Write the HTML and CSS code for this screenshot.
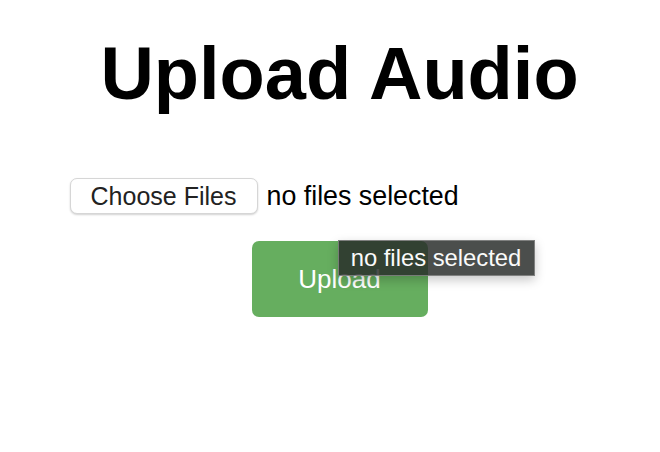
FILE: index.html
```html
<!DOCTYPE html>
<html>
<head>
<meta charset="utf-8">
<link rel="stylesheet" href="styles.css">
</head>
<body>
<div class="page">
  <h1 class="title">Upload Audio</h1>
  <form class="form">
    <div class="file-row">
      <span class="file-btn">Choose Files</span>
      <span class="file-label">no files selected</span>
    </div>
    <div class="submit-row">
      <span class="upload-btn">Upload</span>
      <span class="tooltip">no files selected</span>
    </div>
  </form>
</div>
</body>
</html>
```
FILE: styles.css
```css
html, body {
  margin: 0;
  padding: 0;
  background: #ffffff;
}
body {
  font-family: "Liberation Sans", Arial, sans-serif;
  color: #000;
}
.page {
  width: 660px;
  height: 452px;
  display: flex;
  flex-direction: column;
  align-items: center;
  padding-left: 19px;
  box-sizing: border-box;
}
.title {
  margin: 31px 0 0 0;
  font-size: 74px;
  font-weight: bold;
  line-height: 86px;
  letter-spacing: 0;
}
.form {
  width: 540px;
  margin-top: 61px;
  display: flex;
  flex-direction: column;
  align-items: center;
}
.file-row {
  align-self: flex-start;
  display: flex;
  align-items: center;
  gap: 9px;
}
.file-btn {
  box-sizing: border-box;
  width: 188px;
  height: 36px;
  border: 1px solid #d6d6d6;
  border-radius: 7px;
  background: #fff;
  box-shadow: 0 1px 2px rgba(0,0,0,0.18);
  display: flex;
  align-items: center;
  justify-content: center;
  font-size: 25px;
  color: #222;
}
.file-label {
  font-size: 26.8px;
  color: #000;
}
.submit-row {
  position: relative;
  margin-top: 27px;
}
.upload-btn {
  box-sizing: border-box;
  width: 176px;
  height: 76px;
  border-radius: 7px;
  background: #66ae5f;
  color: #fff;
  font-size: 26px;
  display: flex;
  align-items: center;
  justify-content: center;
}
.tooltip {
  position: absolute;
  left: 86px;
  top: -1px;
  box-sizing: border-box;
  width: 197px;
  height: 36px;
  background: rgba(40, 44, 42, 0.84);
  border: 1px solid rgba(150, 150, 150, 0.7);
  box-shadow: 0 4px 10px rgba(0,0,0,0.22);
  color: #fafafa;
  font-size: 23.8px;
  display: flex;
  align-items: center;
  justify-content: center;
  white-space: nowrap;
}
```
